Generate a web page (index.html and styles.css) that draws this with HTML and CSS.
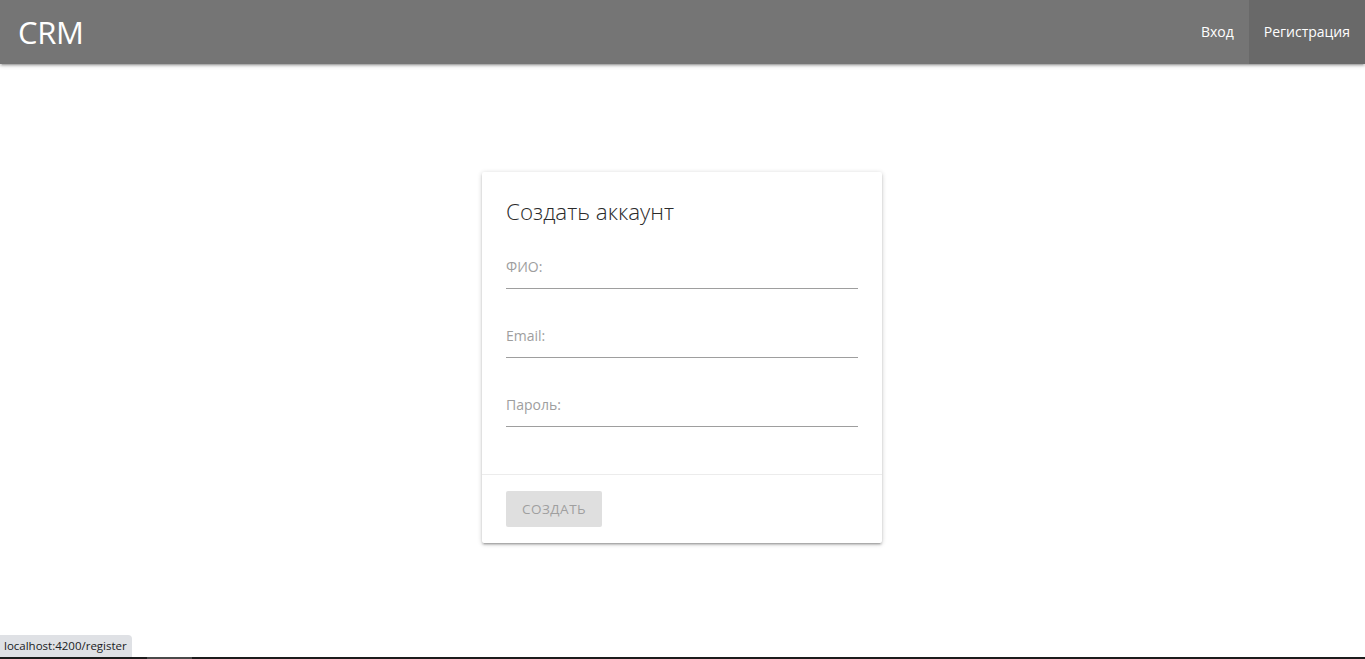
FILE: index.html
```html
<!DOCTYPE html>
<html lang="ru">
<head>
<meta charset="utf-8">
<title>CRM</title>
<link rel="stylesheet" href="styles.css">
</head>
<body>
<nav class="navbar">
  <a class="brand" href="#">CRM</a>
  <ul class="nav-links">
    <li><a href="#">Вход</a></li>
    <li class="active"><a href="#">Регистрация</a></li>
  </ul>
</nav>
<main class="page">
  <form class="card">
    <div class="card-content">
      <span class="card-title">Создать аккаунт</span>
      <div class="fields">
        <div class="field"><label class="field-label">ФИО:</label><input class="field-input" type="text"></div>
        <div class="field"><label class="field-label">Email:</label><input class="field-input" type="email"></div>
        <div class="field"><label class="field-label">Пароль:</label><input class="field-input" type="password"></div>
      </div>
    </div>
    <div class="card-action">
      <button class="btn" type="button" disabled>Создать</button>
    </div>
  </form>
</main>
<div class="statusbar">localhost:4200/register</div>
<div class="taskbar"><span class="taskbar-seg"></span></div>
</body>
</html>
```
FILE: styles.css
```css
* { box-sizing: border-box; }
html, body { margin: 0; padding: 0; }
body {
  font-family: "Open Sans", "Noto Sans", sans-serif;
  background: #fff;
  color: rgba(0,0,0,0.87);
  height: 659px;
  overflow: hidden;
}
.navbar {
  height: 64px;
  background: #757575;
  display: flex;
  align-items: center;
  justify-content: space-between;
  box-shadow: 0 2px 2px 0 rgba(0,0,0,0.14), 0 3px 1px -2px rgba(0,0,0,0.12), 0 1px 5px 0 rgba(0,0,0,0.2);
  position: relative;
  z-index: 2;
}
.brand {
  color: #fff;
  text-decoration: none;
  font-size: 31px;
  padding-left: 18px;
  letter-spacing: -0.3px;
  line-height: 64px;
}
.nav-links {
  list-style: none;
  margin: 0;
  padding: 0;
  display: flex;
  height: 64px;
}
.nav-links a {
  display: block;
  color: #fff;
  text-decoration: none;
  font-size: 14px;
  line-height: 64px;
  padding: 0 15px;
}
.nav-links .active a { background: rgba(0,0,0,0.1); }
.page {
  display: flex;
  justify-content: center;
  padding-top: 108px;
  padding-right: 1px;
}
.card {
  width: 400px;
  background: #fff;
  border-radius: 2px;
  box-shadow: 0 2px 2px 0 rgba(0,0,0,0.14), 0 3px 1px -2px rgba(0,0,0,0.12), 0 1px 5px 0 rgba(0,0,0,0.2);
}
.card-content { padding: 24px 24px 24px; }
.card-title {
  display: block;
  font-size: 22.4px;
  font-weight: 300;
  line-height: 32px;
  margin-bottom: 12px;
  color: #2b2b2b;
}
.fields {
  display: flex;
  flex-direction: column;
  gap: 20px;
  margin-bottom: 23px;
}
.field {
  display: flex;
  flex-direction: column;
  justify-content: flex-end;
  height: 49px;
  border-bottom: 1px solid #9e9e9e;
  padding-bottom: 11px;
}
.field-label {
  color: #9e9e9e;
  font-size: 14px;
  line-height: 20px;
}
.field-input {
  position: absolute;
  opacity: 0;
  width: 0;
  height: 0;
  border: 0;
  padding: 0;
}
.card-action {
  border-top: 1px solid rgba(160,160,160,0.2);
  padding: 16px 24px;
}
.btn {
  height: 36px;
  width: 96px;
  border: 0;
  border-radius: 2px;
  background: #dfdfdf;
  color: #9f9f9f;
  font-family: inherit;
  font-size: 13.5px;
  text-transform: uppercase;
  letter-spacing: 0.5px;
  padding: 0 16px;
}
.statusbar {
  position: fixed;
  left: 0;
  bottom: 2px;
  height: 22px;
  width: 132px;
  background: #dfe1e5;
  border-top-right-radius: 4px;
  font-size: 11.5px;
  line-height: 22px;
  padding-left: 4px;
  color: #202124;
  white-space: nowrap;
}
.taskbar {
  position: fixed;
  left: 0;
  right: 0;
  bottom: 0;
  height: 2px;
  background: #1c1c1c;
}
.taskbar-seg {
  position: absolute;
  left: 147px;
  width: 45px;
  top: 0;
  height: 2px;
  background: #4a4a4a;
}
```
